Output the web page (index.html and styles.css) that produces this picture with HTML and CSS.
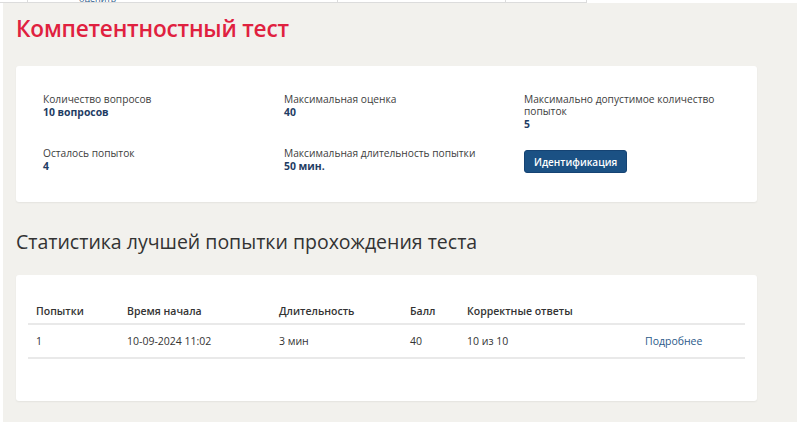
FILE: index.html
```html
<!DOCTYPE html>
<html lang="ru">
<head>
<meta charset="utf-8">
<title>Компетентностный тест</title>
<link rel="stylesheet" href="styles.css">
</head>
<body>
<div class="topstrip">
  <div class="tcell c1"></div>
  <div class="tcell c2"><span class="cut">оценить</span></div>
  <div class="tcell c3"></div>
  <div class="tcell c4"></div>
</div>
<main class="page">
  <h1 class="title">Компетентностный тест</h1>
  <section class="card info">
    <div class="info-grid">
      <div class="item"><div class="label">Количество вопросов</div><div class="value">10 вопросов</div></div>
      <div class="item"><div class="label">Максимальная оценка</div><div class="value">40</div></div>
      <div class="item"><div class="label">Максимально допустимое количество попыток</div><div class="value">5</div></div>
      <div class="item"><div class="label">Осталось попыток</div><div class="value">4</div></div>
      <div class="item"><div class="label">Максимальная длительность попытки</div><div class="value">50 мин.</div></div>
      <div class="item"><button class="btn">Идентификация</button></div>
    </div>
  </section>
  <h2 class="subtitle">Статистика лучшей попытки прохождения теста</h2>
  <section class="card stats">
    <table class="tbl">
      <thead>
        <tr><th class="w1">Попытки</th><th class="w2">Время начала</th><th class="w3">Длительность</th><th class="w4">Балл</th><th class="w5">Корректные ответы</th><th></th></tr>
      </thead>
      <tbody>
        <tr><td>1</td><td>10-09-2024 11:02</td><td>3 мин</td><td>40</td><td>10 из 10</td><td class="more"><a href="#">Подробнее</a></td></tr>
      </tbody>
    </table>
  </section>
</main>
</body>
</html>
```
FILE: styles.css
```css
html, body { margin: 0; padding: 0; background: #fff; }
body { font-family: "Open Sans", "Noto Sans", sans-serif; color: #333; width: 800px; height: 425px; overflow: hidden; }

.topstrip { display: flex; height: 3px; overflow: hidden; }
.tcell { height: 2px; border-bottom: 1px solid #dcdcdc; border-right: 1px solid #dcdcdc; background: #fff; position: relative; overflow: hidden; }
.c1 { width: 27px; }
.c2 { width: 309px; }
.c3 { width: 167px; }
.c4 { width: 80px; }
.cut { position: absolute; left: 51px; bottom: -1px; font-size: 9px; line-height: 9px; color: #2c5a8a; }

.page { margin: 0 3px; background: #f2f1ed; height: 419px; padding: 0 40px 0 13px; box-sizing: border-box; overflow: hidden; }

.title { margin: 0; padding-top: 11px; font-size: 22.6px; line-height: 30px; font-weight: 600; color: #e0213f; letter-spacing: -0.2px; }

.card { background: #fff; border-radius: 3px; box-shadow: 0 1px 2px rgba(0,0,0,0.06); }

.info { margin-top: 22px; height: 136px; padding: 27px 0 0 27px; box-sizing: border-box; }
.info-grid { display: grid; grid-template-columns: 241px 240px 205px; row-gap: 12px; }
.item { min-height: 42px; }
.label { font-size: 10.2px; line-height: 12px; padding-bottom: 1px; color: #3d3d3d; }
.value { font-size: 10.4px; line-height: 12px; font-weight: 700; color: #1f3d64; }
.btn { margin-top: 3px; background: #1b5184; color: #fff; border: 1px solid #154373; border-radius: 3px; font-family: inherit; font-size: 10px; font-weight: 600; padding: 0 9px; height: 23px; }

.subtitle { margin: 27px 0 0; font-size: 19.5px; line-height: 26px; font-weight: 400; color: #333; }

.stats { margin-top: 20px; height: 126px; padding: 24px 12px 0 12px; box-sizing: border-box; }
.tbl { width: 717px; border-collapse: collapse; font-size: 10.5px; }
.tbl th { text-align: left; font-weight: 600; padding: 0 8px; height: 24px; vertical-align: middle; border-bottom: 2px solid #e9e9e9; color: #333; }
.tbl td { padding: 0 8px; height: 32px; border-bottom: 2px solid #e9e9e9; color: #333; }
.w1 { width: 75px; }
.w2 { width: 136px; }
.w3 { width: 115px; }
.w4 { width: 41px; }
.w5 { width: 162px; }
.more a { color: #2c5a8a; text-decoration: none; }
```
